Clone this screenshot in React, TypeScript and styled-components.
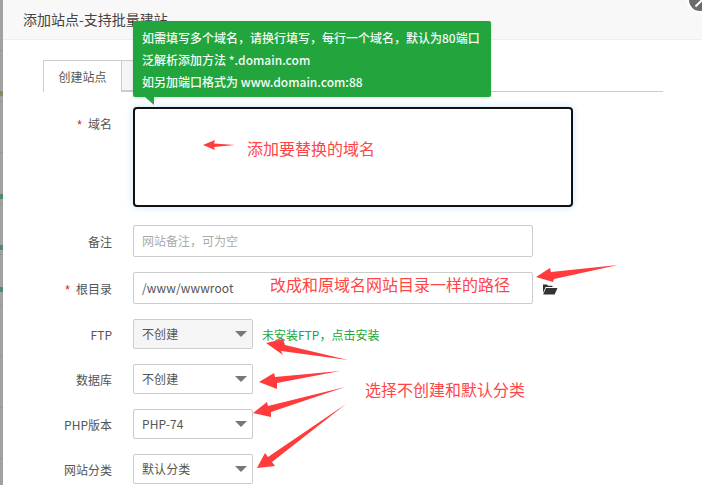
import React from "react";
import styled, { createGlobalStyle } from "styled-components";

const CJK = `"Noto Sans CJK SC", "Open Sans", sans-serif`;

const Global = createGlobalStyle`
  html, body { margin: 0; padding: 0; background: #fff; overflow: hidden; }
  * { box-sizing: border-box; }
`;

const Page = styled.div`
  position: relative;
  width: 702px;
  height: 485px;
  overflow: hidden;
  display: flex;
  font-family: ${CJK};
  background: #fff;
`;

const Backdrop = styled.div`
  position: relative;
  flex: 0 0 3px;
  background: repeating-linear-gradient(to bottom, #a2a2a2 0, #a2a2a2 50px, #979797 50px, #979797 51px);
`;

const BackdropMark = styled.i<{ $top: number; $color: string }>`
  position: absolute;
  left: 0;
  top: ${(p) => p.$top}px;
  width: 3px;
  height: 5px;
  background: ${(p) => p.$color};
`;

const Dialog = styled.div`
  flex: 1;
  min-width: 0;
  display: flex;
  flex-direction: column;
`;

const TitleBar = styled.header`
  height: 40px;
  flex: none;
  padding: 9px 0 0 20px;
  font-size: 14px;
  line-height: 20px;
  color: #444;
  background: #f8f8f8;
  border-bottom: 1px solid #eee;
`;

const Close = styled.span`
  position: absolute;
  right: -9px;
  top: -11px;
  width: 22px;
  height: 22px;
  border-radius: 50%;
  background: #6b6b6b;
  box-shadow: 0 0 0 2px #fff;
  &::after {
    content: "";
    position: absolute;
    left: 5px;
    top: 13px;
    width: 10px;
    height: 2px;
    background: #fff;
    transform: rotate(-45deg);
  }
`;

const Content = styled.div`
  padding: 20px 39px 0 40px;
`;

const Tabs = styled.div`
  display: flex;
  height: 32px;
  border-bottom: 1px solid #ccc;
`;

const Tab = styled.div<{ $active?: boolean }>`
  width: ${(p) => (p.$active ? "79px" : "60px")};
  height: ${(p) => (p.$active ? "32px" : "31px")};
  border: 1px solid #ccc;
  border-left-width: ${(p) => (p.$active ? "1px" : "0")};
  border-bottom: ${(p) => (p.$active ? "0" : "1px solid #ccc")};
  background: ${(p) => (p.$active ? "#fff" : "#f5f5f5")};
  font-size: 12px;
  line-height: 32px;
  text-align: center;
  color: #555;
`;

const Form = styled.div`
  display: flex;
  flex-direction: column;
  padding-top: 15px;
`;

const Row = styled.div<{ $gap: number }>`
  display: flex;
  align-items: center;
  margin-bottom: ${(p) => p.$gap}px;
`;

const Label = styled.label<{ $offset?: number }>`
  flex: 0 0 69px;
  text-align: right;
  font-size: 12px;
  color: #555;
  white-space: nowrap;
  margin-right: 21px;
  position: relative;
  top: ${(p) => p.$offset ?? 0}px;
`;

const Star = styled.span`
  color: #ef0808;
  margin-right: 6px;
  font-family: "Liberation Sans", sans-serif;
`;

const DomainBox = styled.div`
  width: 440px;
  height: 100px;
  border: 2px solid #111;
  border-radius: 4px;
  background: #fff;
  box-shadow: 0 0 6px 1px rgba(130, 190, 240, 0.35);
`;

const TextField = styled.div<{ $muted?: boolean }>`
  width: 400px;
  height: 32px;
  padding-left: 8px;
  border: 1px solid #ccc;
  border-radius: 2px;
  font-size: 12px;
  line-height: 30px;
  color: ${(p) => (p.$muted ? "#aaa" : "#555")};
  letter-spacing: ${(p) => (p.$muted ? "0" : "0.1px")};
`;

const FolderIcon = styled.svg`
  margin-left: 9px;
  flex: none;
  position: relative;
  top: 1px;
`;

const Select = styled.div<{ $disabled?: boolean }>`
  position: relative;
  width: 120px;
  height: 30px;
  padding-left: 8px;
  border: 1px solid #ccc;
  border-radius: 2px;
  background: ${(p) => (p.$disabled ? "#f5f5f5" : "#fff")};
  font-size: 12px;
  line-height: 28px;
  color: #555;
  letter-spacing: 0.1px;
  &::after {
    content: "";
    position: absolute;
    right: 5px;
    top: 11px;
    border-style: solid;
    border-width: 6px 6px 0;
    border-color: #777 transparent transparent;
  }
`;

const Install = styled.span`
  margin-left: 9px;
  font-size: 12px;
  color: #20a53a;
`;

const Tip = styled.div`
  position: absolute;
  left: 133px;
  top: 21px;
  width: 358px;
  height: 76px;
  padding: 6px 0 0 9px;
  background: #22a53d;
  border-radius: 2px;
  box-shadow: 0 1px 3px rgba(0, 0, 0, 0.15);
  font-size: 12px;
  line-height: 22px;
  font-weight: 500;
  color: #f6fcf7;
  white-space: nowrap;
  &::after {
    content: "";
    position: absolute;
    left: 12px;
    top: 76px;
    width: 0;
    height: 0;
    border-top: 8px solid #22a53d;
    border-left: 9px solid transparent;
  }
`;

const Note = styled.span<{ $x: number; $y: number }>`
  position: absolute;
  left: ${(p) => p.$x}px;
  top: ${(p) => p.$y}px;
  font-size: 16px;
  line-height: 22px;
  color: #ff4545;
  white-space: nowrap;
`;

const Arrows = styled.svg`
  position: absolute;
  left: 0;
  top: 0;
`;

const arrows = [
  "203,145 215,140 214,143.5 235,145 214,147 215,150",
  "536,277 550,268 551,272 618,265 554,279 553,282",
  "266,343 283,339 285,345 348,360 281,351 283,355",
  "259,382 274,373 275,377 340,371 277,383 277,389",
  "253,413 267,402 268,406 345,387 271,412 271,417",
  "257,468 265,453 268,457 346,404 272,462 275,466",
];

export default function App() {
  return (
    <Page>
      <Global />
      <Backdrop>
        <BackdropMark $top={91} $color="#7f8f5f" />
        <BackdropMark $top={194} $color="#4f8a6a" />
        <BackdropMark $top={245} $color="#4f8a6a" />
        <BackdropMark $top={287} $color="#4f8a6a" />
      </Backdrop>
      <Dialog>
        <TitleBar>添加站点-支持批量建站</TitleBar>
        <Content>
          <Tabs>
            <Tab $active>创建站点</Tab>
            <Tab />
          </Tabs>
          <Form>
            <Row $gap={18}>
              <Label $offset={-34}>
                <Star>*</Star>域名
              </Label>
              <DomainBox />
            </Row>
            <Row $gap={15}>
              <Label>备注</Label>
              <TextField $muted>网站备注，可为空</TextField>
            </Row>
            <Row $gap={15}>
              <Label>
                <Star>*</Star>根目录
              </Label>
              <TextField>/www/wwwroot</TextField>
              <FolderIcon width="16" height="12" viewBox="0 0 16 12">
                <path d="M1 1.5h4l1 1.2h4.5V4H3.6L1.2 9.5H1z" fill="#333" />
                <path d="M4 5h11.5L12.6 11.5H1.2z" fill="#333" />
              </FolderIcon>
            </Row>
            <Row $gap={15}>
              <Label>FTP</Label>
              <Select $disabled>不创建</Select>
              <Install>未安装FTP，点击安装</Install>
            </Row>
            <Row $gap={15}>
              <Label>数据库</Label>
              <Select>不创建</Select>
            </Row>
            <Row $gap={15}>
              <Label>PHP版本</Label>
              <Select>PHP-74</Select>
            </Row>
            <Row $gap={0}>
              <Label>网站分类</Label>
              <Select>默认分类</Select>
            </Row>
          </Form>
        </Content>
      </Dialog>
      <Close />
      <Tip>
        <div>如需填写多个域名，请换行填写，每行一个域名，默认为80端口</div>
        <div>泛解析添加方法 *.domain.com</div>
        <div>如另加端口格式为 www.domain.com:88</div>
      </Tip>
      <Arrows width="702" height="485" viewBox="0 0 702 485">
        {arrows.map((points) => (
          <polygon key={points} points={points} fill="#ff3b3b" />
        ))}
      </Arrows>
      <Note $x={247} $y={137}>添加要替换的域名</Note>
      <Note $x={270} $y={273}>改成和原域名网站目录一样的路径</Note>
      <Note $x={365} $y={378}>选择不创建和默认分类</Note>
    </Page>
  );
}
